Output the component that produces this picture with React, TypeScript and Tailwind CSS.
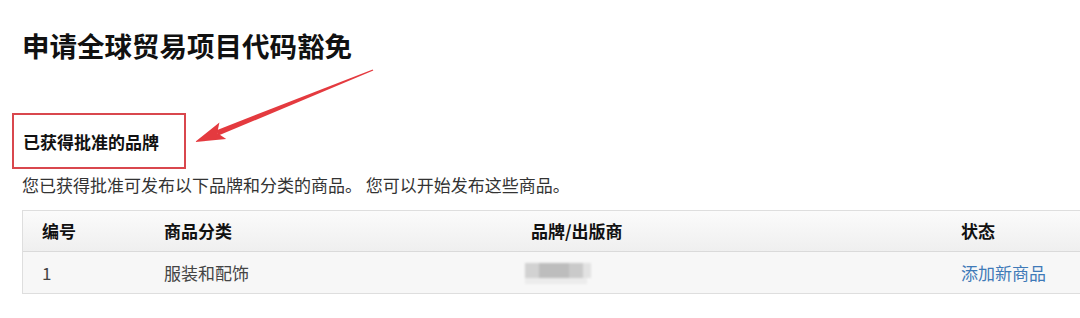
import React from "react";

const font = { fontFamily: '"Noto Sans CJK SC", "Noto Sans", sans-serif' };

const rows = [{ id: "1", category: "服装和配饰" }];

const BlurredBrand: React.FC = () => (
  <div className="flex flex-col blur-[1px]">
    <div className="flex h-[15px]">
      <div className="w-[14px] bg-[#d2d2d2]" />
      <div className="w-[30px] bg-[#bdbdbd]" />
      <div className="w-[14px] bg-[#cacaca]" />
      <div className="w-[8px] bg-[#e2e2e2]" />
    </div>
    <div className="h-[6px] w-[62px] bg-[#ececec]" />
  </div>
);

const App: React.FC = () => {
  return (
    <div
      className="relative h-[318px] w-[1080px] overflow-hidden bg-white text-[#333]"
      style={font}
    >
      <div className="pl-[22px]">
        <h1 className="mt-[32px] text-[27.5px] font-bold leading-[27px] text-[#111]">
          申请全球贸易项目代码豁免
        </h1>

        <div className="-ml-[10px] mt-[54px] flex h-[56px] w-[174px] items-center border-2 border-[#d9474d] pl-[9px]">
          <h2 className="text-[17px] font-bold leading-none text-[#111]">
            已获得批准的品牌
          </h2>
        </div>

        <p className="mt-[4px] text-[17px] leading-[24px] text-[#333]">
          您已获得批准可发布以下品牌和分类的商品。 您可以开始发布这些商品。
        </p>

        <div className="mt-[13px] border-y border-l border-[#dedede] text-[17px]">
          <div className="grid h-[41px] grid-cols-[141px_367px_430px_1fr] items-center border-b border-[#dadada] bg-gradient-to-b from-[#fbfbfb] to-[#efefef] font-bold text-[#111]">
            <div className="pl-[19px]">编号</div>
            <div>商品分类</div>
            <div>品牌/出版商</div>
            <div>状态</div>
          </div>
          {rows.map((row) => (
            <div
              key={row.id}
              className="grid h-[41px] grid-cols-[141px_367px_430px_1fr] items-center bg-[#f7f7f7] text-[#444]"
            >
              <div className="pl-[19px]">{row.id}</div>
              <div>{row.category}</div>
              <div className="-ml-[6px] pt-[2px]">
                <BlurredBrand />
              </div>
              <div className="text-[#3f7ab8]">添加新商品</div>
            </div>
          ))}
        </div>
      </div>

      {/* annotation arrow */}
      <svg
        className="pointer-events-none absolute left-0 top-0"
        width="1080"
        height="318"
        viewBox="0 0 1080 318"
      >
        <path
          d="M373.3 70.6 L218.4 135.6 L216 130.4 L372.7 69.4 Z"
          fill="#e43a3f"
        />
        <path
          d="M195 142 L219.4 122.4 L217.2 133 L226.2 139.1 Z"
          fill="#e43a3f"
        />
      </svg>
    </div>
  );
};

export default App;
